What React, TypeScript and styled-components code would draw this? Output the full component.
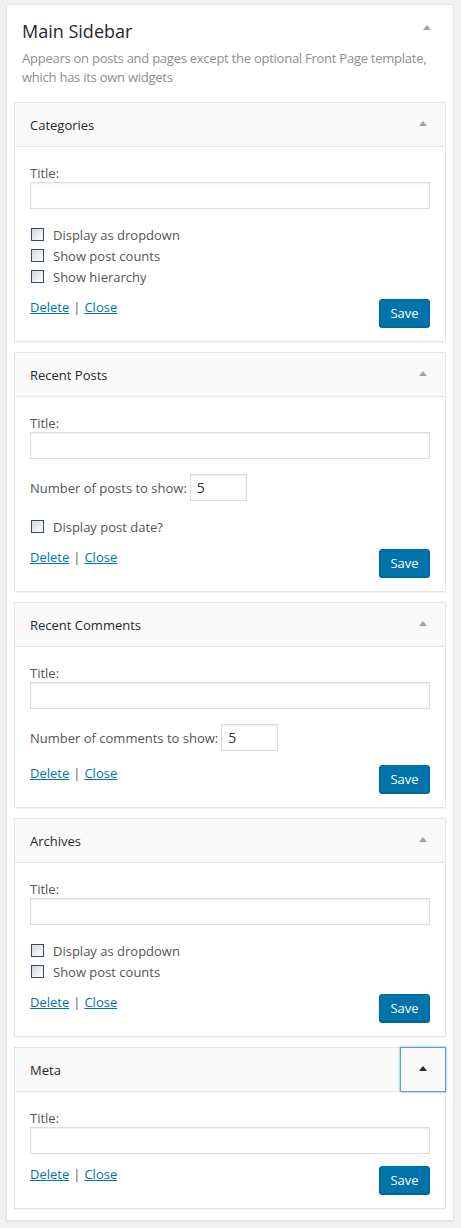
import React from "react"
import styled, { createGlobalStyle } from "styled-components"

interface WidgetData {
  title: string
  numberLabel?: string
  options?: string[]
  focused?: boolean
}

const widgets: WidgetData[] = [
  {
    title: "Categories",
    options: ["Display as dropdown", "Show post counts", "Show hierarchy"],
  },
  {
    title: "Recent Posts",
    numberLabel: "Number of posts to show:",
    options: ["Display post date?"],
  },
  {
    title: "Recent Comments",
    numberLabel: "Number of comments to show:",
  },
  {
    title: "Archives",
    options: ["Display as dropdown", "Show post counts"],
  },
  {
    title: "Meta",
    focused: true,
  },
]

const Arrow = ({ dark }: { dark?: boolean }) => (
  <svg width="8" height="5" viewBox="0 0 8 5">
    <polygon points="4,0 8,5 0,5" fill={dark ? "#23282d" : "#a0a5aa"} />
  </svg>
)

const Widget = (props: { widget: WidgetData }) => {
  const { widget } = props
  const endsWithNumber = !!widget.numberLabel && !widget.options

  return (
    <WidgetBox>
      <WidgetTop>
        <WidgetTitle>{widget.title}</WidgetTitle>
        <Toggle $focused={widget.focused}>
          <Arrow dark={widget.focused} />
        </Toggle>
      </WidgetTop>
      <WidgetBody>
        <FieldLabel>Title:</FieldLabel>
        <TextInput type="text" />

        {widget.numberLabel && (
          <NumberRow>
            <span>{widget.numberLabel}</span>
            <NumberInput type="text" defaultValue="5" />
          </NumberRow>
        )}

        {widget.options && (
          <Options>
            {widget.options.map((opt) => (
              <OptionRow key={opt}>
                <Checkbox type="checkbox" />
                <span>{opt}</span>
              </OptionRow>
            ))}
          </Options>
        )}

        <Actions $gap={endsWithNumber ? 12 : 10}>
          <Links>
            <LinkText href="#">Delete</LinkText>
            <Sep>|</Sep>
            <LinkText href="#">Close</LinkText>
          </Links>
          <SaveButton>Save</SaveButton>
        </Actions>
      </WidgetBody>
    </WidgetBox>
  )
}

const App = () => {
  return (
    <>
      <GlobalStyle />
      <Sidebar>
        <SidebarHead>
          <SidebarName>Main Sidebar</SidebarName>
          <SidebarArrow>
            <Arrow />
          </SidebarArrow>
        </SidebarHead>
        <Description>
          Appears on posts and pages except the optional Front Page template,
          which has its own widgets
        </Description>
        <WidgetList>
          {widgets.map((w) => (
            <Widget key={w.title} widget={w} />
          ))}
        </WidgetList>
      </Sidebar>
    </>
  )
}

export default App

const GlobalStyle = createGlobalStyle`
  html, body {
    margin: 0;
    padding: 0;
    background: #f1f1f1;
  }
  body {
    font-family: "Open Sans", "Liberation Sans", sans-serif;
    font-size: 13px;
    color: #444;
  }
  * {
    box-sizing: border-box;
  }
`

const Sidebar = styled.div`
  margin: 4px 7px 6px 6px;
  background: #fff;
  border: 1px solid #e5e5e5;
  box-shadow: 0 1px 1px rgba(0, 0, 0, 0.04);
  padding: 14px 7px 11px 7px;
`

const SidebarHead = styled.div`
  display: flex;
  align-items: center;
  justify-content: space-between;
  padding: 0 15px 0 8px;
  height: 24px;
`

const SidebarName = styled.h2`
  margin: 0;
  font-size: 18px;
  font-weight: 400;
  color: #23282d;
  line-height: 24px;
`

const SidebarArrow = styled.div`
  display: flex;
  margin-top: -8px;
`

const Description = styled.div`
  margin: 6px 0 0 0;
  padding: 0 6px 0 8px;
  line-height: 19px;
  letter-spacing: -0.25px;
  color: #8c8f94;
`

const WidgetList = styled.div`
  display: flex;
  flex-direction: column;
  gap: 10px;
  margin-top: 15px;
`

const WidgetBox = styled.div`
  background: #fff;
  border: 1px solid #e5e5e5;
  box-shadow: 0 1px 1px rgba(0, 0, 0, 0.04);
`

const WidgetTop = styled.div`
  display: flex;
  align-items: stretch;
  height: 44px;
  background: #fafafa;
  border-bottom: 1px solid #e5e5e5;
  padding-left: 15px;
`

const WidgetTitle = styled.h3`
  flex: 1;
  margin: 0;
  display: flex;
  align-items: center;
  font-size: 13px;
  font-weight: 400;
  color: #23282d;
`

const Toggle = styled.div<{ $focused?: boolean }>`
  width: 46px;
  margin: -1px -1px -1px 0;
  display: flex;
  align-items: center;
  justify-content: center;
  border: 1px solid ${(p) => (p.$focused ? "#5b9dd9" : "transparent")};
  box-shadow: ${(p) =>
    p.$focused ? "0 0 2px rgba(30, 140, 190, 0.8)" : "none"};
  padding-bottom: 2px;
`

const WidgetBody = styled.div`
  padding: 17px 15px 14px 15px;
`

const FieldLabel = styled.div`
  line-height: 18px;
  color: #555;
`

const TextInput = styled.input`
  display: block;
  width: 100%;
  height: 27px;
  margin: 0;
  border: 1px solid #ddd;
  box-shadow: inset 0 1px 2px rgba(0, 0, 0, 0.07);
  background: #fff;
  outline: none;
  font-family: inherit;
`

const NumberRow = styled.div`
  display: flex;
  align-items: center;
  gap: 3px;
  margin-top: 15px;
  color: #555;
`

const NumberInput = styled(TextInput)`
  width: 57px;
  padding: 0 6px;
  font-size: 14px;
  color: #333;
`

const Options = styled.div`
  margin-top: 15px;
`

const OptionRow = styled.label`
  display: flex;
  align-items: center;
  height: 21px;
  color: #555;
`

const Checkbox = styled.input`
  appearance: none;
  width: 13px;
  height: 13px;
  margin: 0 9px 0 1px;
  border: 1px solid #2f4d6b;
  background: linear-gradient(135deg, #d6d6d6 0%, #f4f4f4 70%, #fff 100%);
`

const Actions = styled.div<{ $gap: number }>`
  display: flex;
  justify-content: space-between;
  align-items: flex-start;
  margin-top: ${(p) => p.$gap}px;
`

const Links = styled.div`
  line-height: 20px;
`

const LinkText = styled.a`
  color: #0073aa;
  text-decoration: underline;
`

const Sep = styled.span`
  color: #555;
  margin: 0 4px;
`

const SaveButton = styled.button`
  margin-top: 2px;
  width: 51px;
  height: 28px;
  background: #0073aa;
  border: 1px solid #006799;
  border-radius: 3px;
  box-shadow: 0 1px 0 #006799;
  color: #fff;
  font-family: inherit;
  font-size: 13px;
  padding: 0;
`
